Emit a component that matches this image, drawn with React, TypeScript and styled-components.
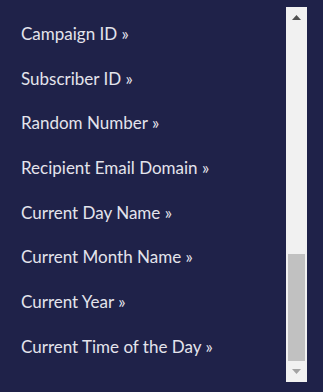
import { createGlobalStyle } from 'styled-components';
import styled from 'styled-components';

const GlobalStyle = createGlobalStyle`
  html, body {
    margin: 0;
    padding: 0;
    background: #1f2249;
    height: 100%;
    overflow: hidden;
  }
  #root {
    height: 100%;
  }
`;

const Panel = styled.div`
  display: flex;
  height: 392px;
  background: #1f2249;
  font-family: Lato, "Open Sans", sans-serif;
`;

const List = styled.ul`
  flex: 1;
  list-style: none;
  margin: 0;
  padding: 21px 0 0 21px;
`;

const Item = styled.li`
  height: 44.7px;
  font-size: 17px;
  line-height: 26px;
  color: #e4e4ec;
`;

const Scrollbar = styled.div`
  display: flex;
  flex-direction: column;
  width: 21px;
  height: 375px;
  margin: 7px 16px 0 0;
  background: #f1f1f1;
`;

const ArrowButton = styled.div<{ $dim?: boolean }>`
  display: flex;
  align-items: center;
  justify-content: center;
  height: 21px;
  color: ${(p) => (p.$dim ? '#a3a3a3' : '#505050')};
`;

const TrackArea = styled.div`
  flex: 1;
  display: flex;
  flex-direction: column;
  justify-content: flex-end;
  padding: 0 2px;
`;

const Thumb = styled.div`
  height: 107px;
  background: #c1c1c1;
`;

const items = [
  'Campaign ID',
  'Subscriber ID',
  'Random Number',
  'Recipient Email Domain',
  'Current Day Name',
  'Current Month Name',
  'Current Year',
  'Current Time of the Day',
];

export default function App() {
  return (
    <>
      <GlobalStyle />
      <Panel>
        <List>
          {items.map((label) => (
            <Item key={label}>{label} »</Item>
          ))}
        </List>
        <Scrollbar>
          <ArrowButton>
            <svg width="9" height="5" viewBox="0 0 9 5">
              <path d="M4.5 0 L9 5 L0 5 Z" fill="currentColor" />
            </svg>
          </ArrowButton>
          <TrackArea>
            <Thumb />
          </TrackArea>
          <ArrowButton $dim>
            <svg width="9" height="5" viewBox="0 0 9 5">
              <path d="M0 0 L9 0 L4.5 5 Z" fill="currentColor" />
            </svg>
          </ArrowButton>
        </Scrollbar>
      </Panel>
    </>
  );
}
